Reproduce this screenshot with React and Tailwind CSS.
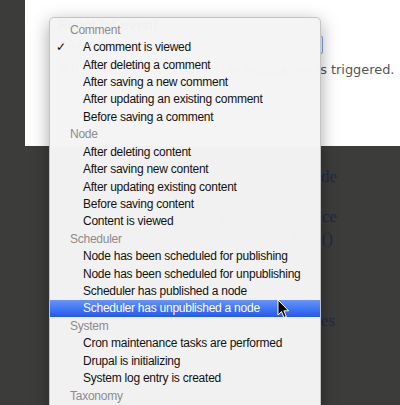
import React from "react";

const groups = [
  {
    label: "Comment",
    items: [
      "A comment is viewed",
      "After deleting a comment",
      "After saving a new comment",
      "After updating an existing comment",
      "Before saving a comment",
    ],
  },
  {
    label: "Node",
    items: [
      "After deleting content",
      "After saving new content",
      "After updating existing content",
      "Before saving content",
      "Content is viewed",
    ],
  },
  {
    label: "Scheduler",
    items: [
      "Node has been scheduled for publishing",
      "Node has been scheduled for unpublishing",
      "Scheduler has published a node",
      "Scheduler has unpublished a node",
    ],
  },
  {
    label: "System",
    items: [
      "Cron maintenance tasks are performed",
      "Drupal is initializing",
      "System log entry is created",
    ],
  },
  { label: "Taxonomy", items: [] },
];

const checked = "A comment is viewed";
const hovered = "Scheduler has unpublished a node";

function Cursor() {
  return (
    <svg width="13" height="20" viewBox="0 0 13 20" className="absolute left-[277px] top-[299px]">
      <path
        d="M1 1 L1 16 L4.5 12.6 L7 18.5 L9.3 17.5 L6.9 11.8 L11.6 11.8 Z"
        fill="#000"
        stroke="#fff"
        strokeWidth="1"
        strokeLinejoin="round"
      />
    </svg>
  );
}

export default function App() {
  return (
    <div className="relative w-[400px] h-[405px] overflow-hidden bg-[#3c3c3b] flex font-['Liberation_Sans',Arial,sans-serif]">
      {/* page behind the menu */}
      <div className="ml-[25px] flex-1 flex flex-col">
        <div className="h-[146px] bg-white pl-[33px] pt-[16px]">
          <div className="text-[14px] font-bold text-[#333] leading-[18px]">React on event</div>
          <div className="mt-[2px] w-[265px] h-[18px] border border-[#7aa7e6] rounded-[2px] bg-[#f9fbff] text-[12px] text-[#333] pl-2 leading-[16px]">
            A comment is viewed
          </div>
          <div className="mt-[6px] text-[12.9px] text-[#555] font-['DejaVu_Sans',sans-serif] whitespace-nowrap">
            When the event occurs, rule evaluation is triggered.
          </div>
        </div>
        <div className="flex-1 w-[312px] text-right pt-[18px] text-[17px] text-[#1d2b45] font-['Liberation_Serif',serif] whitespace-nowrap">
          <div className="h-[22px]">Unpublish node</div>
          <div className="mt-[18px] h-[22px]">Rule dependence</div>
          <div className="h-[22px] pr-[4px]">entity_load()</div>
          <div className="mt-[60px] h-[22px] pr-[2px]">Schedule types</div>
        </div>
      </div>

      {/* open select menu */}
      <div className="absolute left-[49px] top-[17px] w-[272px] h-[420px] rounded-[5px] bg-[#f4f4f4]/[0.985] border border-black/20 shadow-[0_5px_18px_rgba(0,0,0,0.35)] pt-[3px] text-[12px] tracking-[-0.25px] whitespace-nowrap">
        {groups.map((g) => (
          <div key={g.label}>
            <div className="h-[17.43px] flex items-center pl-[20px] text-[#8c8c8c]">{g.label}</div>
            {g.items.map((it) => (
              <div
                key={it}
                className={
                  it === hovered
                    ? "relative h-[17.43px] flex items-center pl-[33px] text-white bg-linear-to-b from-[#6794f8] to-[#2356ee]"
                    : "relative h-[17.43px] flex items-center pl-[33px] text-[#111]"
                }
              >
                {it === checked && <span className="absolute left-[6px] text-[12px]">✓</span>}
                {it}
              </div>
            ))}
          </div>
        ))}
      </div>

      <Cursor />
    </div>
  );
}
